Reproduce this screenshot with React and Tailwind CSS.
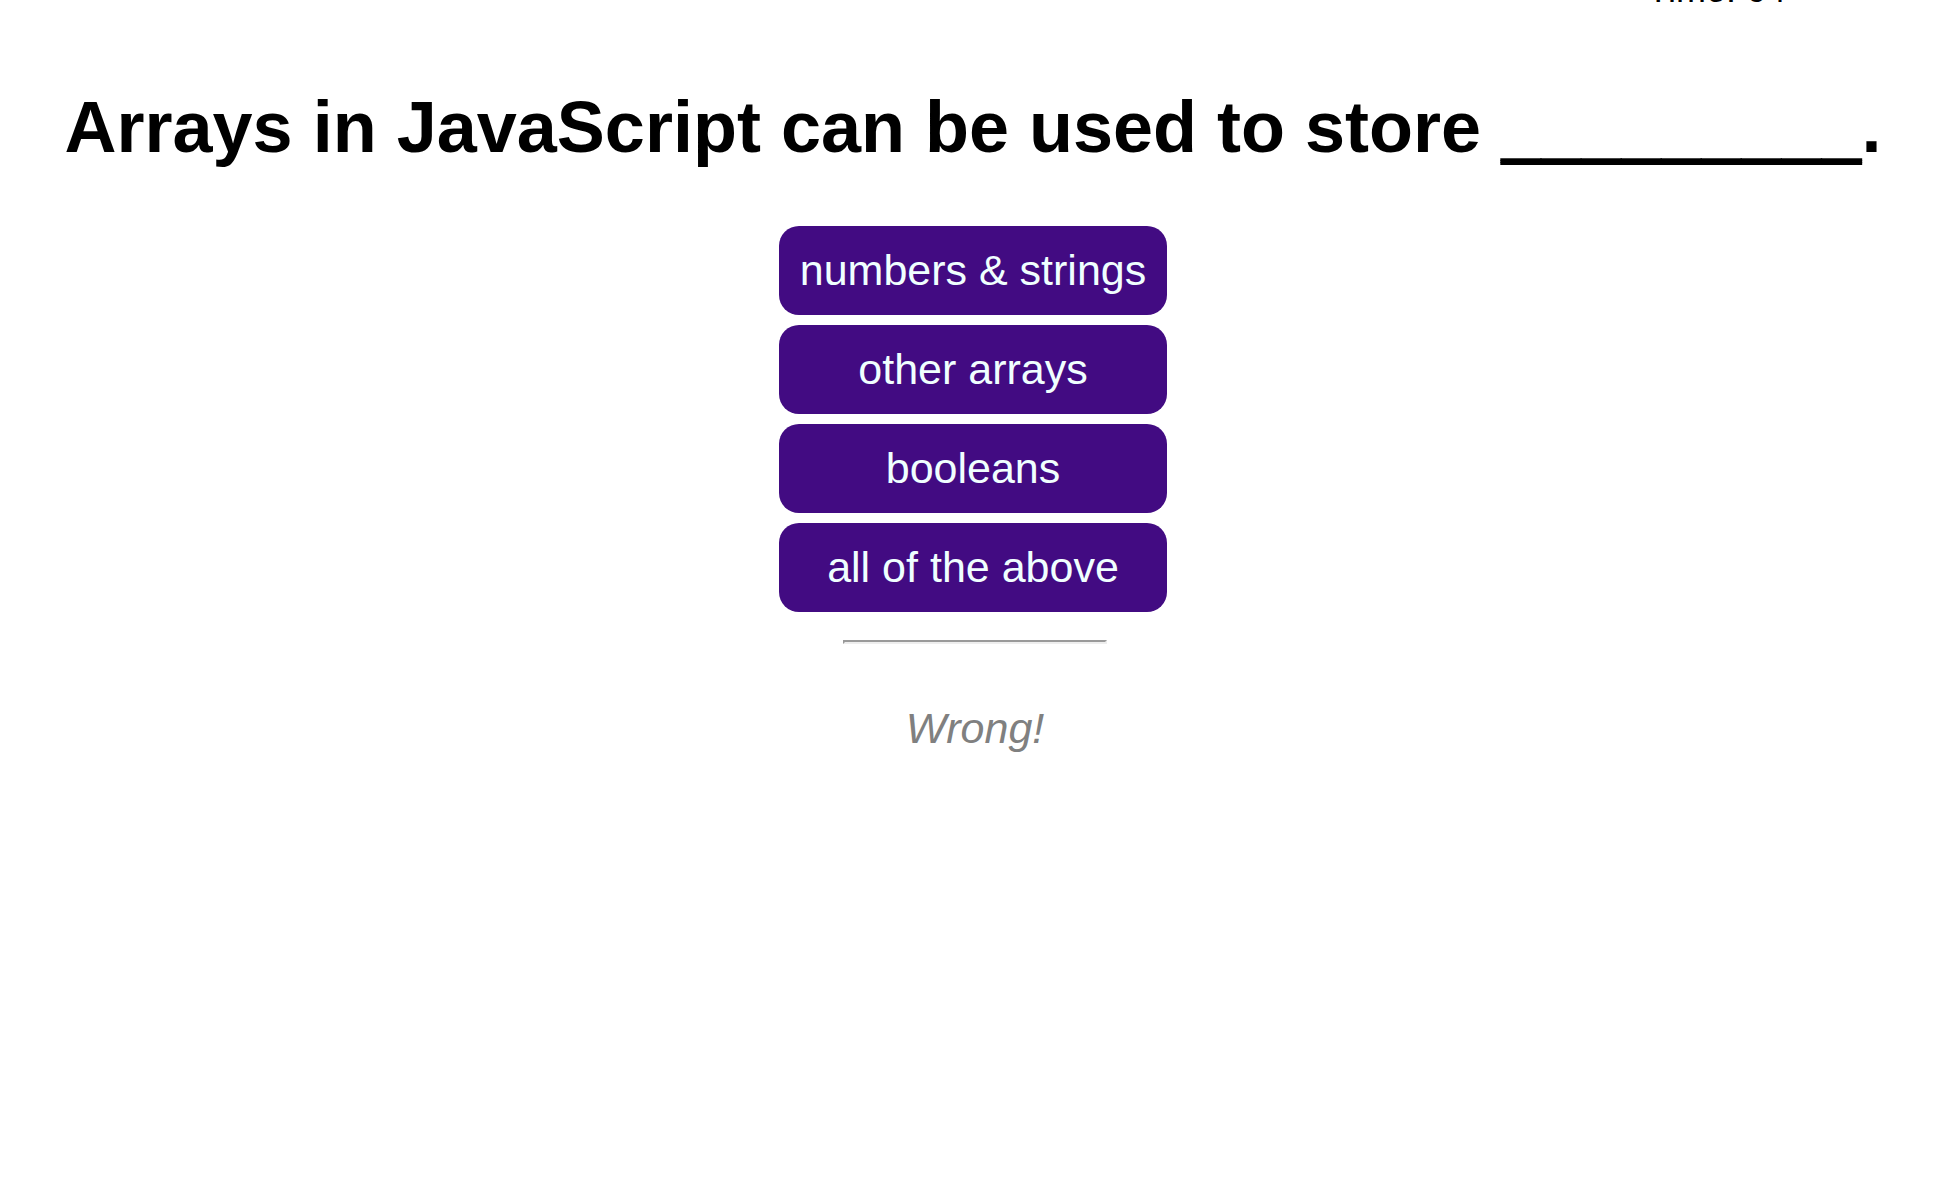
export default function App() {
  const choices = ["numbers & strings", "other arrays", "booleans", "all of the above"];
  return (
    <div className="min-h-screen bg-white pr-[14px] font-['Liberation_Sans',Arial,sans-serif] text-black">
      <header className="flex h-2 items-end justify-end pr-40">
        <p className="text-[36px] leading-9">Time: 64</p>
      </header>
      <main className="flex flex-col items-center pt-20">
        <h1 className="text-center text-[72px] font-bold leading-[78px]">
          Arrays in JavaScript can be used to store{" "}
          <span className="[text-shadow:0_2px_0_black,0_4px_0_black]">_________</span>.
        </h1>
        <div className="mt-15 grid w-[388px] gap-[10px]">
          {choices.map((choice) => (
            <button
              key={choice}
              type="button"
              className="h-[89px] rounded-[20px] bg-[#420b82] px-5 text-[43px] text-[#f0ffff]"
            >
              {choice}
            </button>
          ))}
        </div>
        <hr className="mt-7 ml-1 h-1 w-66 border-2 border-t-[#9a9a9a] border-r-[#eeeeee] border-b-[#eeeeee] border-l-[#9a9a9a]" />
        <p className="mt-13 ml-1 text-[43px] italic text-[#808080]">Wrong!</p>
      </main>
    </div>
  );
}
